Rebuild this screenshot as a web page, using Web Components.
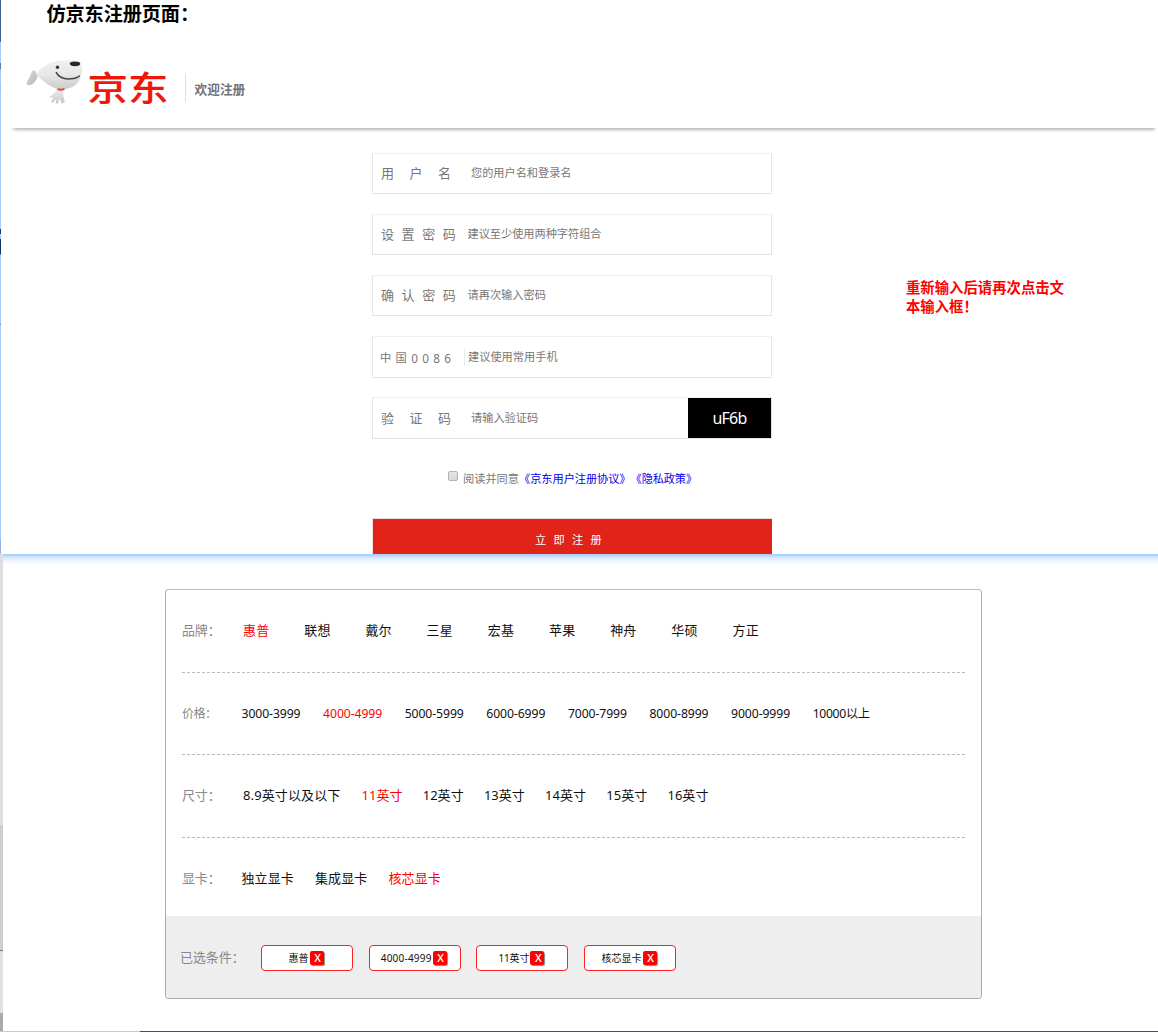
<!DOCTYPE html>
<html lang="zh-CN">
<head>
<meta charset="utf-8">
<title>仿京东注册页面</title>
<style>
html,body{margin:0;height:1032px;overflow:hidden;background:#fff}
body{font-family:"Noto Sans","Noto Sans CJK SC",sans-serif;font-size:13px;color:#111}
</style>
</head>
<body>
<demo-page></demo-page>
<script>
function define(name, html, init) {
  const tpl = document.createElement('template');
  tpl.innerHTML = html;
  customElements.define(name, class extends HTMLElement {
    constructor() {
      super();
      this.attachShadow({mode: 'open'}).append(tpl.content.cloneNode(true));
    }
    connectedCallback() { if (init) init.call(this, this.shadowRoot); }
  });
}

/* A single line of text, tracked so that it spans "w" pixels. */
define('text-run', `<style>
:host{display:block;white-space:nowrap;line-height:20px}
span{display:inline-block}
</style><span><slot></slot></span>`, function (root) {
  const s = root.querySelector('span');
  if (this.hasAttribute('size')) this.style.fontSize = this.getAttribute('size') + 'px';
  if (this.hasAttribute('w')) {
    const n = [...this.textContent].length;
    const gap = (parseFloat(this.getAttribute('w')) - s.getBoundingClientRect().width) / n;
    s.style.letterSpacing = gap + 'px';
  }
});

define('jd-logo', `<style>
:host{display:block;width:145px;height:48px}
svg{display:block;overflow:visible}
text{font-family:"Noto Sans CJK SC",sans-serif;font-weight:500;fill:#ee1708;stroke:#ee1708;stroke-width:.2px}
</style>
<svg width="145" height="58" viewBox="26 58 145 58">
<defs>
<linearGradient id="b" x1="0" y1="0" x2="0" y2="1"><stop offset="0" stop-color="#f0f0f0"/><stop offset=".5" stop-color="#e7e7e7"/><stop offset="1" stop-color="#cacaca"/></linearGradient>
<linearGradient id="t" x1="0" y1="0" x2="1" y2="1"><stop offset="0" stop-color="#dcdcdc"/><stop offset="1" stop-color="#b4b4b4"/></linearGradient>
<linearGradient id="l" x1="0" y1="0" x2="0" y2="1"><stop offset="0" stop-color="#f0f0f0"/><stop offset="1" stop-color="#c5c5c5"/></linearGradient>
</defs>
<path d="M37.500 76C36.500 72 35 70 33 70.500C31 71.500 31 76 28 80C26 83 26 85 29 85.300C33 85 35 82 37 78Z" fill="url(#t)"/>
<path d="M56.500 89.500C55 93 53 94 50 96.500L49.700 98L53.500 97.200L51 102.500L53 102.800L56.500 98.500L55.700 103.500H58L59.300 98.500L62 103.600L64.800 102.300L63.500 96C62.600 93 63.300 91 63.800 89Z" fill="url(#l)"/>
<path d="M36 75C40 69 47 62.500 58 61C67 59.500 76 60 80 62.500C84 66 82 75 80 79C77 86 69 89.500 61 89.500C51 89 43 80 36 75Z" fill="url(#b)"/>
<path d="M57.500 89.200Q61 90.200 64.500 89" stroke="#e8483f" stroke-width="2" fill="none"/>
<ellipse cx="75" cy="63.800" rx="5.200" ry="2.400" fill="#292929"/>
<circle cx="57.500" cy="67.200" r="1.700" fill="#333"/>
<path d="M56.300 72.700C59 77.500 65 79.400 71 78.800C75 78.400 78 77.500 79.300 76" stroke="#444" stroke-width="1.600" stroke-linecap="round" fill="none"/>
<text transform="translate(87.500 101.200) scale(1 .84)" font-size="40.500">京东</text>
</svg>`);

define('jd-header', `<style>
:host{display:flex;flex-direction:column;height:129px}
h1{margin:0;height:28px;padding-left:45.500px;font-size:19px;font-weight:700;color:#000;flex:none}
h1 text-run{line-height:28px}
.bar{display:flex;align-items:flex-start;padding:30px 0 0 25px;height:70px;flex:none}
i{width:1px;height:29px;background:#dedede;margin:15px 8.500px 0 14px;flex:none}
.bar text-run{margin-top:21px;font-weight:700;color:#727277}
.rule{height:5px;margin:0 1px 0 9px;background:linear-gradient(#bcbcbc,#c8c8c8 1px,#dcdcdc 2px,#efefef 3px,#fff);mask:linear-gradient(90deg,transparent,#000 7px calc(100% - 4px),transparent);flex:none}
</style>
<h1><text-run w="152.500" size="19.200">仿京东注册页面：</text-run></h1>
<div class="bar"><jd-logo></jd-logo><i></i><text-run w="50.800" size="12.700">欢迎注册</text-run></div><div class="rule"></div>`);

define('form-field', `<style>
:host{display:flex;box-sizing:border-box;width:400px;height:41px;border:1px solid #e5e5e5;border-top-color:#f0f0f0;color:#777;align-items:stretch}
:host([tall]){height:42px;--drop:10px;--hint-drop:10px}
.label{width:var(--label,96px);padding:var(--drop,9px) 0 0 var(--pad,8px);box-sizing:border-box;flex:none}
.hint{flex:1;padding-top:var(--hint-drop,9px)}
.div{width:1px;height:17px;margin:12px 3px 0 0;background:#e8e8e8;display:none}
:host([divided]) .div{display:block}
</style>
<div class="label"><slot name="label"></slot></div><span class="div"></span><div class="hint"><slot></slot></div><slot name="end"></slot>`);

define('captcha-code', `<style>:host{display:grid;place-items:center;width:83px;background:#000;color:#fff}text-run{margin-top:-1px}</style><text-run w="34" size="16">uF6b</text-run>`);

define('agree-line', `<style>
:host{display:flex;height:20px;color:#777}
i{box-sizing:border-box;width:10px;height:10px;border:1px solid #b2b2b2;border-radius:2px;background:linear-gradient(#e6e6e6,#d8d8d8);margin:3px 5px 0 0}
text-run{margin-top:1px}
.a{color:#00e}
</style><i></i><text-run w="56" size="11.200">阅读并同意</text-run><text-run class="a" w="111.600" size="11.200">《京东用户注册协议》</text-run><text-run class="a" w="66.400" size="11.200">《隐私政策》</text-run>`);

define('register-form', `<style>
:host{display:flex;align-items:flex-start;padding:24px 0 0 371px;height:425px;box-sizing:border-box}
form{display:flex;flex-direction:column;gap:20px;width:400px;flex:none}
.l4{--label:92.500px}
.phone{--label:91px;--pad:7px;--drop:11px;margin-bottom:-1px}
agree-line{margin:9px 0 0 76px}
.btn{box-sizing:border-box;width:400px;height:36px;border:1px solid #f0dcdc;border-width:1px 0 0 1px;background:#e2231a;color:#fff;margin-top:10px;padding:11px 0 0 162px}
.warn{margin:125px 0 0 134px;width:170px;color:#f00;font-weight:700}
.warn text-run{line-height:19px}
</style>
<form>
<form-field><text-run slot="label" w="85.500" size="13">用户名</text-run><text-run style="padding-left:2px" w="100.500" size="11.200">您的用户名和登录名</text-run></form-field>
<form-field class="l4"><text-run slot="label" w="82.500" size="13">设置密码</text-run><text-run style="padding-left:2px" w="134" size="11.200">建议至少使用两种字符组合</text-run></form-field>
<form-field class="l4"><text-run slot="label" w="82.500" size="13">确认密码</text-run><text-run style="padding-left:2px" w="78.400" size="11.200">请再次输入密码</text-run></form-field>
<form-field class="phone" divided tall><span slot="label" style="display:flex"><text-run w="31.200" size="11.200">中国</text-run><text-run w="44" size="11.700">0086</text-run></span><text-run w="89.600" size="11.200">建议使用常用手机</text-run></form-field>
<form-field tall><text-run slot="label" w="85.500" size="13">验证码</text-run><text-run style="padding-left:2px" w="67.200" size="11.200">请输入验证码</text-run><captcha-code slot="end"></captcha-code></form-field>
<agree-line></agree-line>
<div class="btn"><text-run w="74" size="11.200">立即注册</text-run></div>
</form>
<div class="warn"><text-run w="158" size="14.360">重新输入后请再次点击文</text-run><text-run w="71.800" size="14.360">本输入框！</text-run></div>`);

define('filter-row', `<style>
:host{display:flex;box-sizing:border-box;height:83px;margin:0 16px;border-bottom:1px dashed #bbb;align-items:center}
:host([last]){border-bottom:0}
.name{width:var(--lead,61px);color:#888;flex:none}
.opts{display:flex}
::slotted(text-run){width:var(--pitch);flex:none}
::slotted([on]){color:#f00}
</style><div class="name"><slot name="name"></slot></div><div class="opts"><slot></slot></div>`);

define('picked-chip', `<style>
:host{display:flex;box-sizing:border-box;width:92px;height:26px;border:1px solid #f22;border-radius:4px;background:#fff;align-items:center;justify-content:center;gap:1px;padding-right:2px}
b{width:14px;height:14px;margin-top:-1px;background:#f00;border-radius:2px;box-shadow:1px 1px 1px #888;color:#fff;font:500 11px/14px "Noto Sans",sans-serif;text-align:center;padding-left:2px;box-sizing:border-box}
</style><slot></slot><b>X</b>`);

define('filter-panel', `<style>
:host{display:block;box-sizing:border-box;width:817px;height:410px;margin:0 0 0 162px;border:1px solid #aaa;border-top-color:#bbb;border-radius:4px;overflow:hidden;color:#111}
footer{display:flex;align-items:center;height:82px;background:#eee;padding:2px 0 0 14px;box-sizing:border-box}
.t{width:81px;color:#888;margin-top:-2px}
.chips{display:flex;gap:15.700px}
</style>
<filter-row style="--pitch:61.200px;padding-bottom:2px">
<text-run slot="name" w="38.500" size="13">品牌：</text-run>
<text-run w="26.500" on>惠普</text-run><text-run w="26.500">联想</text-run><text-run w="26.500">戴尔</text-run><text-run w="26.500">三星</text-run><text-run w="26.500">宏基</text-run><text-run w="26.500">苹果</text-run><text-run w="26.500">神舟</text-run><text-run w="26.500">华硕</text-run><text-run w="26.500">方正</text-run>
</filter-row>
<filter-row style="--pitch:81.600px;--lead:59.500px;font-size:12.200px;height:82px;padding-top:1px">
<text-run slot="name" w="34.500" size="12">价格：</text-run>
<text-run w="59">3000-3999</text-run><text-run w="59" on>4000-4999</text-run><text-run w="59">5000-5999</text-run><text-run w="59">6000-6999</text-run><text-run w="59">7000-7999</text-run><text-run w="59">8000-8999</text-run><text-run w="59">9000-9999</text-run><text-run w="57">10000以上</text-run>
</filter-row>
<filter-row style="--pitch:61.200px;padding-bottom:2px">
<text-run slot="name" w="38.500" size="13">尺寸：</text-run>
<text-run w="97.500" style="width:118.500px">8.9英寸以及以下</text-run><text-run w="41" on>11英寸</text-run><text-run w="41">12英寸</text-run><text-run w="41">13英寸</text-run><text-run w="41">14英寸</text-run><text-run w="41">15英寸</text-run><text-run w="41">16英寸</text-run>
</filter-row>
<filter-row last style="--pitch:73.500px;--lead:59.500px;height:78px;padding-top:2px">
<text-run slot="name" w="38.500" size="13">显卡：</text-run>
<text-run w="52.500">独立显卡</text-run><text-run w="52.500">集成显卡</text-run><text-run w="52.500" on>核芯显卡</text-run>
</filter-row>
<footer><div class="t"><text-run w="64.500" size="13">已选条件：</text-run></div>
<div class="chips">
<picked-chip><text-run w="20" size="10">惠普</text-run></picked-chip>
<picked-chip><text-run w="51" size="10">4000-4999</text-run></picked-chip>
<picked-chip><text-run w="31" size="10">11英寸</text-run></picked-chip>
<picked-chip><text-run w="40" size="10">核芯显卡</text-run></picked-chip>
</div></footer>`);

define('demo-page', `<style>
:host{display:flex;flex-direction:column;width:1158px;height:1032px}
.top,.low{display:flex}
.top{height:554px}
.low{height:477px}
.e1{width:1px;flex:none;background:linear-gradient(#3f6294 0 42px,#a5cbfb 42px 63px,#6876a2 63px 69px,#a5cbfb 69px 87px,#8fb2de 87px 89px,#a5cbfb 89px 229px,#1c3865 229px 234px,#a5cbfb 234px 239px,#12315f 239px 254px,#2f83d8 254px 255px,#a5cbfb 255px 324px,#6d88b0 324px 325px,#a5cbfb 325px 540px,#8fb4e8 540px)}
.e2{width:3px;flex:none;background:linear-gradient(#dedede 0 271px,#cecece 271px 396px,#777 396px 397px,#e0e0e0 397px 459px,#aaa 459px)}
main{flex:1;min-width:0}
.low main{box-sizing:border-box;padding-top:35px;background:linear-gradient(#a3c9f8,#d0e4fc 3px,#eff6ff 7px,#fff 11px)}
.end{height:1px;background:linear-gradient(90deg,#c9c9c9 0 140px,#4d4d56 140px)}
</style>
<div class="top"><div class="e1"></div><main><jd-header></jd-header><register-form></register-form></main></div>
<div class="low"><div class="e2"></div><main><filter-panel></filter-panel></main></div>
<div class="end"></div>`);
</script>
</body>
</html>
